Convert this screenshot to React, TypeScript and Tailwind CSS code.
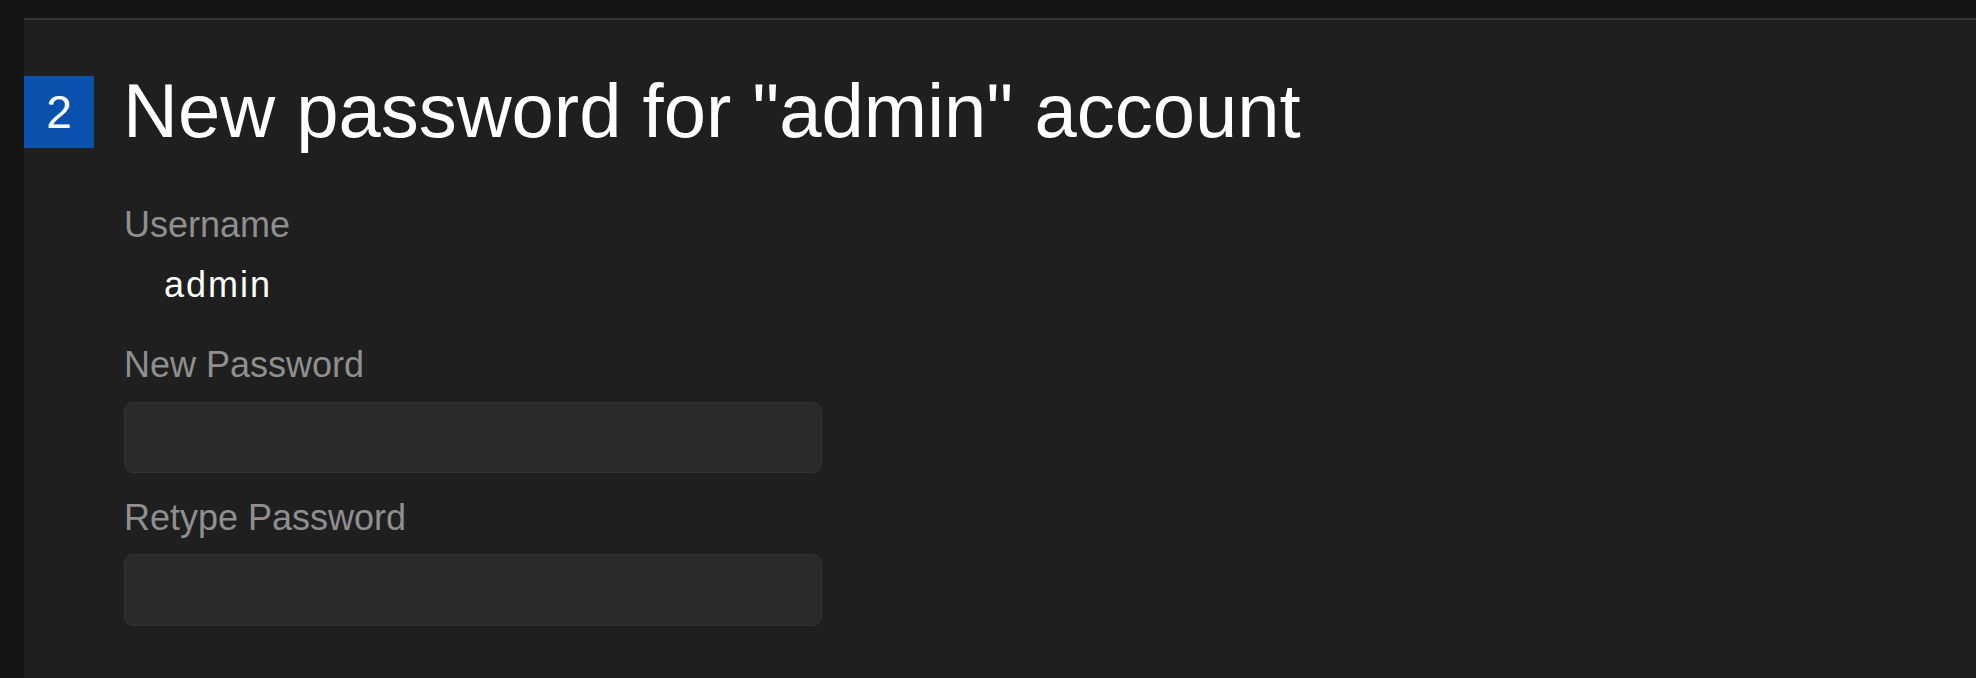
import React from "react";

export default function App() {
  return (
    <div
      className="w-[1976px] h-[678px] bg-[#151515] pt-[18px] pl-[24px] overflow-hidden"
      style={{ fontFamily: '"Liberation Sans", Arial, sans-serif' }}
    >
      <div className="h-full w-full bg-[#1f1f1f] border-t-2 border-[#353535] pt-[56px]">
        <div className="flex items-start">
          <div className="w-[70px] h-[72px] bg-[#0a51ad] flex items-center justify-center text-white text-[46px] leading-none">
            2
          </div>
          <h1 className="ml-[29px] mt-[-3px] text-white text-[76px] leading-[75px] font-normal whitespace-nowrap">
            New password for "admin" account
          </h1>
        </div>
        <div className="pl-[100px] pt-[56px] w-[798px]">
          <div className="text-[#8f8f8f] text-[36px] leading-[42px]">Username</div>
          <div className="mt-[18px] pl-[40px] text-white text-[36px] leading-[42px] tracking-[2px]">admin</div>
          <div className="mt-[38px] text-[#8f8f8f] text-[36px] leading-[42px]">New Password</div>
          <input
            type="password"
            className="mt-[16px] block w-[698px] h-[71px] rounded-[9px] bg-[#2a2a2a] border border-[#333333] outline-none"
          />
          <div className="mt-[24px] text-[#8f8f8f] text-[36px] leading-[42px]">Retype Password</div>
          <input
            type="password"
            className="mt-[15px] block w-[698px] h-[72px] rounded-[9px] bg-[#2a2a2a] border border-[#333333] outline-none"
          />
        </div>
      </div>
    </div>
  );
}
